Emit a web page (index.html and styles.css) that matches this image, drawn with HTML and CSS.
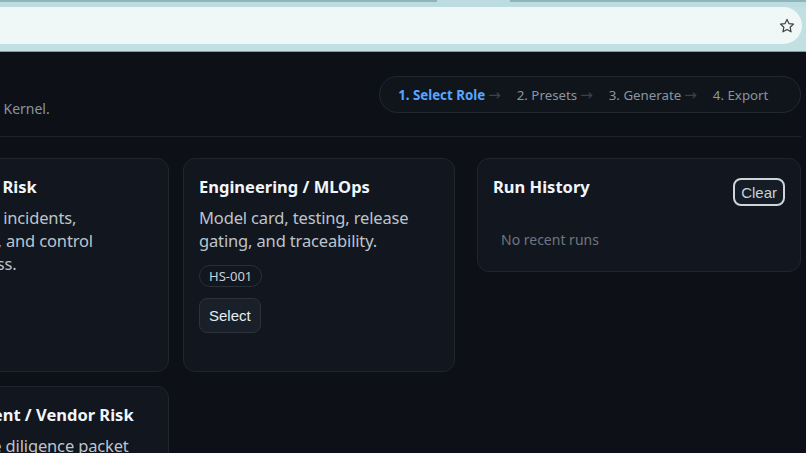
FILE: index.html
```html
<!DOCTYPE html>
<html lang="en">
<head>
<meta charset="utf-8">
<title>Role Select</title>
<link rel="stylesheet" href="styles.css">
</head>
<body>
<div class="chrome">
  <div class="chrome-top"><span class="tab-line a"></span><span class="tab-line b"></span></div>
  <div class="omnibox">
    <svg class="star" viewBox="0 0 24 24" width="18" height="18" aria-hidden="true"><path d="M12 3.2l2.6 5.6 6.1.7-4.5 4.2 1.2 6.1L12 16.8l-5.4 3 1.2-6.1-4.5-4.2 6.1-.7z" fill="none" stroke="#3c4043" stroke-width="1.6" stroke-linejoin="round"/></svg>
  </div>
  <div class="chrome-bottom"></div>
</div>
<div class="page">
  <div class="wrap">
    <header class="header">
      <div class="brand">
        <h1 class="brand-title">Studio</h1>
        <p class="brand-sub">Doc Generation Kernel.</p>
      </div>
      <nav class="stepper">
        <span class="step active">1. Select Role<span class="arrow">→</span></span>
        <span class="step">2. Presets<span class="arrow">→</span></span>
        <span class="step">3. Generate<span class="arrow">→</span></span>
        <span class="step">4. Export<span class="arrow hidden">→</span></span>
      </nav>
    </header>
    <div class="layout">
      <div class="roles">
        <section class="card">
          <h2 class="card-title">Enterprise Risk</h2>
          <p class="card-desc">Exceptions, incidents, escalations, and control effectiveness.</p>
        </section>
        <section class="card">
          <h2 class="card-title">Engineering / MLOps</h2>
          <p class="card-desc">Model card, testing, release gating, and traceability.</p>
          <span class="tag">HS-001</span>
          <div><button class="btn">Select</button></div>
        </section>
        <section class="card">
          <h2 class="card-title">Procurement / Vendor Risk</h2>
          <p class="card-desc">Vendor due diligence packet and contract review.</p>
        </section>
      </div>
      <aside class="card history">
        <div class="history-head">
          <h2 class="card-title">Run History</h2>
          <button class="btn btn-clear">Clear</button>
        </div>
        <div class="history-empty">No recent runs</div>
      </aside>
    </div>
  </div>
</div>
</body>
</html>
```
FILE: styles.css
```css
* { box-sizing: border-box; }
html, body { margin: 0; padding: 0; }
body {
  width: 806px;
  height: 453px;
  overflow: hidden;
  background: #0d1117;
  font-family: "Noto Sans", "Open Sans", sans-serif;
}
.chrome { height: 52px; background: #c2dfe1; display: flex; flex-direction: column; }
.chrome-top { height: 7px; background: #bddcdf; display: flex; }
.tab-line { height: 2px; background: #8db6bb; }
.tab-line.a { width: 437px; }
.tab-line.b { width: 296px; margin-left: 73px; }
.omnibox {
  height: 37px;
  margin: 0 4px 0 -20px;
  background: #eff7f7;
  border-radius: 0 19px 19px 0;
  display: flex;
  align-items: center;
  justify-content: flex-end;
  padding-right: 6px;
}
.star { display: block; }
.chrome-bottom { flex: 1; border-bottom: 1px solid #7f9ea2; }

.page { height: 401px; overflow: hidden; background: #0d1117; }
.wrap { margin-left: -103px; margin-right: 5px; }
.header {
  display: flex;
  justify-content: space-between;
  align-items: flex-start;
  padding: 24px 0 18px;
  border-bottom: 1px solid #1e232b;
}
.brand-title { margin: 0; font-size: 20px; line-height: 24px; color: #e6edf3; font-weight: 700; }
.brand-sub { margin: 0; font-size: 14px; line-height: 18px; color: #8b949e; }
.stepper {
  display: flex;
  gap: 16px;
  height: 37px;
  align-items: center;
  padding: 0 16px 0 18px;
  border: 1px solid #222831;
  border-radius: 19px;
  background: #10151c;
  font-size: 13.3px;
  color: #8b949e;
}
.step { white-space: nowrap; }
.step.active { color: #58a6ff; font-weight: 700; }
.arrow {
  color: #3a414a;
  font-weight: 400;
  margin-left: 3px;
  font-family: "DejaVu Sans", sans-serif;
  font-size: 15px;
}
.arrow.hidden { visibility: hidden; }

.layout {
  display: grid;
  grid-template-columns: 558px 324px;
  gap: 22px;
  margin-top: 21px;
  align-items: start;
}
.roles { display: grid; grid-template-columns: 272px 272px; gap: 14px; }
.card {
  background: #12161e;
  border: 1px solid #20252e;
  border-radius: 12px;
  padding: 15px;
  min-height: 214px;
}
.card-title {
  margin: 0;
  font-size: 16.5px;
  line-height: 26px;
  font-weight: 700;
  color: #f0f6fc;
}
.card-desc {
  margin: 6px 0 0;
  font-size: 16.5px;
  line-height: 23px;
  letter-spacing: -0.15px;
  color: #bcc4cc;
}
.tag {
  display: inline-block;
  margin-top: 13px;
  height: 22px;
  line-height: 20px;
  padding: 0 9px;
  border: 1px solid #2a3038;
  border-radius: 11px;
  font-size: 13px;
  color: #c9d1d9;
}
.btn {
  margin-top: 11px;
  height: 35px;
  padding: 0 9px;
  background: #1a2029;
  border: 1px solid #2c323b;
  border-radius: 8px;
  color: #e6edf3;
  font-family: "Liberation Sans", Arial, sans-serif;
  font-size: 15px;
}
.history { min-height: 114px; padding-bottom: 13px; }
.history-head { display: flex; justify-content: space-between; align-items: flex-start; height: 26px; }
.btn-clear {
  margin: 4px 0 0;
  height: 28px;
  padding: 0 6px;
  font-size: 15px;
  border: 2px solid #cdd4da;
  background: #161c25;
  color: #c9d1d9;
}
.history-empty {
  margin-top: 22px;
  padding: 8px;
  font-size: 14px;
  line-height: 20px;
  color: #6e7681;
}
```
